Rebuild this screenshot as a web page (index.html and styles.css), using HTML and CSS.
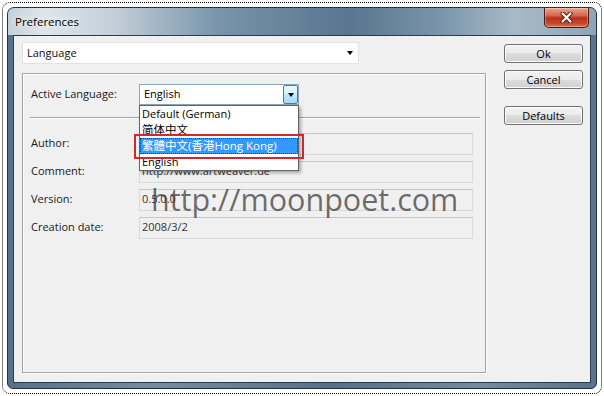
FILE: index.html
```html
<!DOCTYPE html>
<html lang="en">
<head>
  <meta charset="UTF-8">
  <meta name="viewport" content="width=device-width, initial-scale=1.0">
  <title>Preferences</title>
  <link rel="stylesheet" href="styles.css">
</head>
<body>

<div class="shot">
  <div class="window">
    <!-- Title bar -->
    <div class="titlebar">
      <span class="title">Preferences</span>
      <button class="close-btn" aria-label="Close">
        <svg width="13" height="11" viewBox="0 0 13 11">
          <path d="M2.5 1.5 L10.5 9.5 M10.5 1.5 L2.5 9.5" stroke="#4a1810" stroke-width="4" stroke-linecap="round"/>
          <path d="M2.5 1.5 L10.5 9.5 M10.5 1.5 L2.5 9.5" stroke="#fff" stroke-width="2.2" stroke-linecap="round"/>
        </svg>
      </button>
    </div>

    <div class="frame">
      <div class="client">
        <div class="main-col">
          <!-- Page selector -->
          <div class="page-select">
            <span>Language</span>
            <span class="arrow"></span>
          </div>

          <div class="group">
            <div class="lang-row">
              <span class="label">Active Language:</span>
              <div class="combo">
                <span class="combo-text">English</span>
                <span class="combo-btn"><span class="arrow"></span></span>

                <!-- Open drop-down list -->
                <ul class="combo-list">
                  <li>Default (German)</li>
                  <li lang="zh-Hans">简体中文</li>
                  <li class="selected" lang="zh-Hant">繁體中文(香港Hong Kong)<span class="mark"></span></li>
                  <li>English</li>
                </ul>
              </div>
            </div>

            <div class="separator"></div>

            <div class="fields">
              <span class="label">Author:</span>
              <div class="field"></div>
              <span class="label">Comment:</span>
              <div class="field">http://www.artweaver.de</div>
              <span class="label">Version:</span>
              <div class="field">0.5.0.0</div>
              <span class="label">Creation date:</span>
              <div class="field">2008/3/2</div>
            </div>

            <div class="watermark">http://moonpoet.com</div>
          </div>
        </div>

        <div class="side-col">
          <button class="btn">Ok</button>
          <button class="btn btn-cancel">Cancel</button>
          <button class="btn btn-defaults">Defaults</button>
        </div>
      </div>
    </div>
  </div>
</div>

</body>
</html>
```

FILE: styles.css
```css
/* Page and screenshot border */
body {
  margin: 0;
  background: #fff;
  font-family: "Open Sans", "Noto Sans CJK TC", sans-serif;
  font-size: 11px;
  color: #1a1a1a;
}
.shot {
  width: 600px;
  height: 392px;
  margin: 2px;
  padding: 4px;
  box-sizing: border-box;
  border: 1px dotted #000;
  border-radius: 8px;
}

/* Window frame */
.window {
  height: 100%;
  box-sizing: border-box;
  border: 1px solid #22323f;
  border-radius: 7px 7px 6px 6px;
  background: linear-gradient(90deg, #55718c 0%, #748da3 25%, #54708b 55%, #718ba1 80%, #58738d 100%);
  display: flex;
  flex-direction: column;
  overflow: hidden;
}
.titlebar {
  height: 27px;
  flex: none;
  display: flex;
  align-items: center;
  padding-left: 7px;
  background: linear-gradient(90deg, #c4cfd8 0%, #dfe6eb 6%, #c3cfd9 18%, #7893aa 36%, #587690 58%, #7b95ab 74%, #a9bac7 86%, #8fa5b6 100%);
}
.title {
  color: #000;
  font-size: 11.5px;
  padding-bottom: 1px;
  text-shadow: 0 0 6px #fff, 0 0 10px #fff;
}
.close-btn {
  align-self: flex-start;
  margin-left: auto;
  margin-right: 7px;
  width: 45px;
  height: 20px;
  padding: 0;
  border: 1px solid #4a1a12;
  border-top: none;
  border-radius: 0 0 5px 5px;
  background: linear-gradient(#e9a591 0%, #d6664b 40%, #b9321c 52%, #c4472b 80%, #dc7450 100%);
  box-shadow: inset 0 0 0 1px rgba(255, 255, 255, 0.3);
  display: flex;
  align-items: center;
  justify-content: center;
}
.frame {
  flex: 1;
  display: flex;
  padding: 0 5px 5px;
}

/* Dialog client area */
.client {
  flex: 1;
  display: flex;
  gap: 18px;
  padding: 6px 7px 9px 8px;
  border: 1px solid #2b3b49;
  background: #f0f0f0;
}
.main-col {
  width: 464px;
  display: flex;
  flex-direction: column;
  gap: 9px;
}
.page-select {
  width: 337px;
  height: 22px;
  box-sizing: border-box;
  display: flex;
  align-items: center;
  justify-content: space-between;
  padding: 0 5px 2px 4px;
  background: #fff;
  border: 1px solid #e2e2e2;
  color: #111;
}
.page-select .arrow {
  margin-top: 2px;
}
.arrow {
  width: 0;
  height: 0;
  border-left: 3.5px solid transparent;
  border-right: 3.5px solid transparent;
  border-top: 4px solid #000;
}

/* Group box */
.group {
  flex: 1;
  position: relative;
  padding: 10px 5px 0 8px;
  border: 1px solid #a3a3a3;
  box-shadow: inset 1px 1px 0 #fff, 1px 1px 0 #fff;
}
.label {
  padding-bottom: 3px;
}
.lang-row {
  display: grid;
  grid-template-columns: 108px 160px;
  align-items: center;
}
.combo {
  position: relative;
  height: 21px;
  box-sizing: border-box;
  display: flex;
  background: #fff;
  border: 1px solid #8ea4b9;
}
.combo-text {
  flex: 1;
  padding-left: 4px;
  line-height: 17px;
  color: #000;
}
.combo-btn {
  width: 15px;
  box-sizing: border-box;
  display: flex;
  align-items: center;
  justify-content: center;
  border: 1px solid #3c7fb1;
  border-radius: 2px;
  background: linear-gradient(#eaf6fd 0%, #d9f0fc 45%, #bee6fd 50%, #a7d9f5 100%);
}
.combo-list {
  position: absolute;
  top: calc(100% + 1px);
  left: -1px;
  width: 160px;
  margin: 0;
  padding: 0;
  list-style: none;
  box-sizing: border-box;
  background: #fff;
  border: 1px solid #646464;
  box-shadow: 2px 2px 3px rgba(0, 0, 0, 0.3);
  z-index: 2;
}
.combo-list li {
  height: 16px;
  line-height: 15px;
  padding-left: 2px;
  color: #000;
  white-space: nowrap;
}
.combo-list li[lang] {
  font-size: 11.5px;
}
.combo-list li[lang="zh-Hans"] {
  font-family: "Open Sans", "Noto Sans CJK SC", sans-serif;
}
.combo-list li.selected {
  position: relative;
  box-sizing: border-box;
  background: #3399ff;
  color: #fff;
  border: 1px dotted #1c3f73;
  line-height: 13px;
  padding-left: 1px;
}
.mark {
  position: absolute;
  left: -7px;
  top: -5px;
  width: 170px;
  height: 25px;
  box-sizing: border-box;
  border: 2px solid #d3282b;
}
.separator {
  margin: 12px 0 0 -1px;
  border-top: 1px solid #a3a3a3;
  border-bottom: 1px solid #fff;
}
.fields {
  display: grid;
  grid-template-columns: 108px 334px;
  grid-auto-rows: 22px;
  row-gap: 6px;
  align-items: center;
  margin-top: 14px;
}
.field {
  height: 22px;
  box-sizing: border-box;
  padding-left: 2px;
  line-height: 18px;
  color: #333;
  border: 1px solid #d8d8d8;
  border-top-color: #c6c6c6;
}
.watermark {
  position: absolute;
  left: 128px;
  top: 110px;
  font-size: 30.5px;
  line-height: 1;
  color: rgba(55, 55, 55, 0.72);
  pointer-events: none;
  white-space: nowrap;
}

/* Buttons on the right */
.side-col {
  display: flex;
  flex-direction: column;
  padding-top: 2px;
}
.btn {
  width: 79px;
  height: 19px;
  padding: 0 0 1px;
  font-family: inherit;
  font-size: 11px;
  color: #000;
  border: 1px solid #707070;
  border-radius: 3px;
  background: linear-gradient(#f2f2f2 0%, #ebebeb 50%, #dddddd 50%, #cfcfcf 100%);
  box-shadow: inset 0 0 0 1px #fcfcfc;
}
.btn-cancel {
  margin-top: 7px;
}
.btn-defaults {
  margin-top: 17px;
}
```
